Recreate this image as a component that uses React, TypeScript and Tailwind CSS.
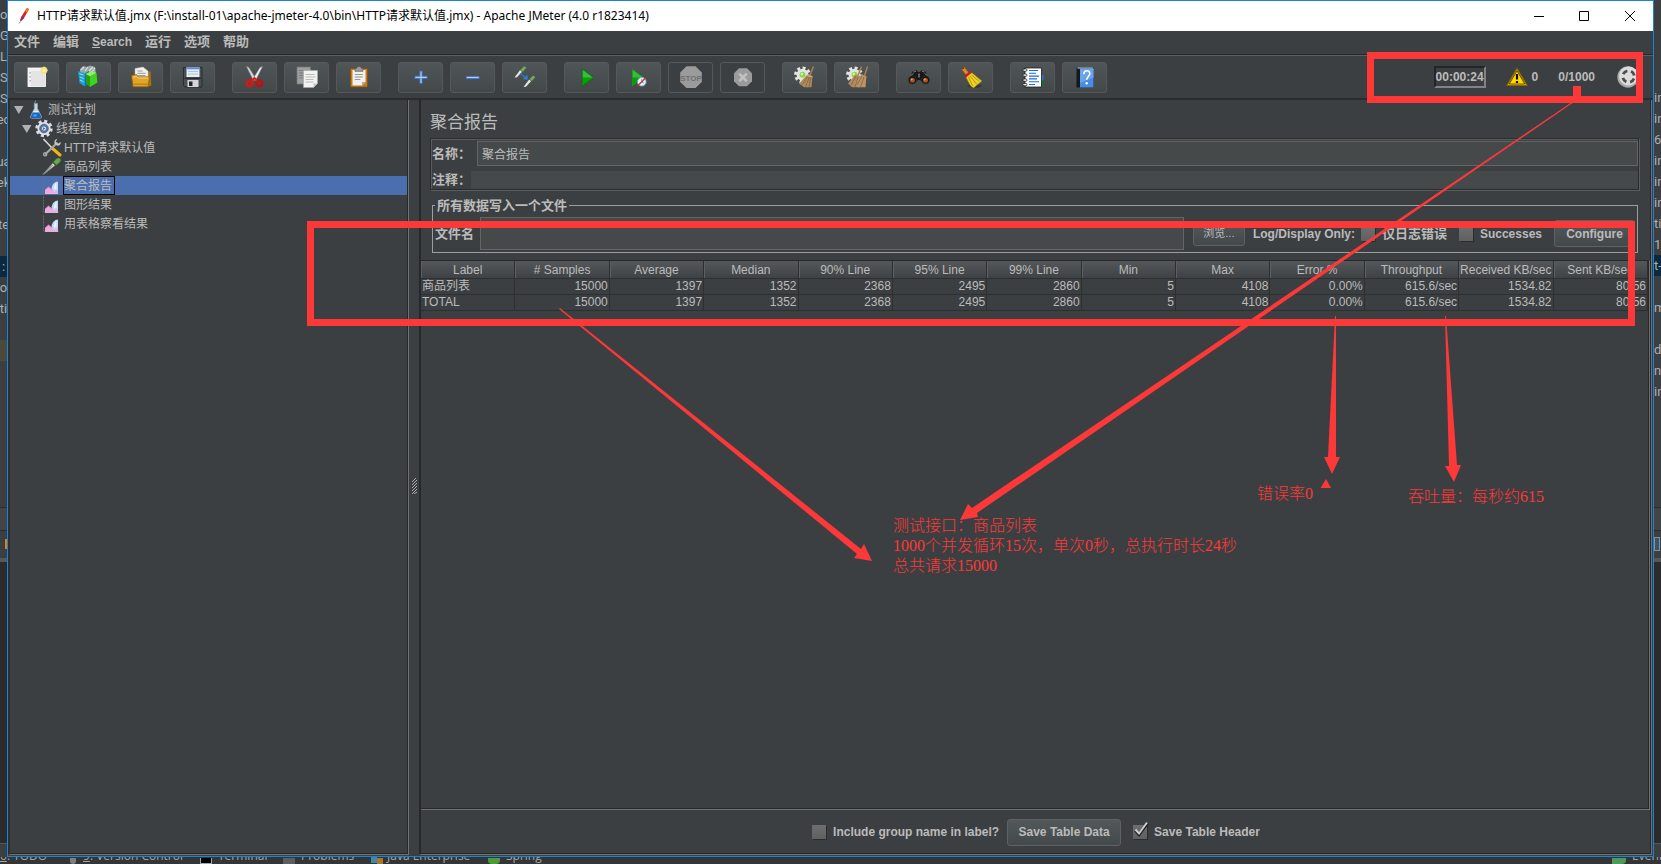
import React from "react";

type IconProps = { children: React.ReactNode };

function ToolIcon({ children }: IconProps) {
  return (
    <svg viewBox="0 0 25 25" className="h-[25px] w-[25px] shrink-0" aria-hidden="true">
      {children}
    </svg>
  );
}

function TreeIcon({ children }: IconProps) {
  return (
    <svg viewBox="0 0 20 19" className="h-[19px] w-5 shrink-0" aria-hidden="true">
      {children}
    </svg>
  );
}

/* ---------- toolbar icons ---------- */

const NewIcon = () => (
  <ToolIcon>
    <rect x="4" y="3" width="17.5" height="18.5" fill="#f1f1f1" stroke="#fff" strokeWidth="0.8" />
    <rect x="7" y="6" width="14" height="15" fill="#e4e4e4" />
    <g fill="#a8a8a8">
      <rect x="5.5" y="7" width="1.2" height="1.6" />
      <rect x="5.5" y="11" width="1.2" height="1.6" />
      <rect x="5.5" y="15" width="1.2" height="1.6" />
    </g>
    <circle cx="20" cy="5.3" r="3.4" fill="#f3e27a" />
    <circle cx="20" cy="5.3" r="1.6" fill="#fff8c8" />
    <path d="M20 1.2v8.2M15.9 5.3h8.2" stroke="#f6e884" strokeWidth="0.7" />
  </ToolIcon>
);

const TemplatesIcon = () => (
  <ToolIcon>
    <path d="M4 4l3-3 4 1 3-1.5 5 1.5 1 6-9 4-7-3z" fill="#9aa6a8" />
    <path d="M5 5l3-3M9 6l3-4M13 6l4-4M16 7l3-4" stroke="#d9dfe0" strokeWidth="1.2" />
    <path d="M2 6l7 2.5v13L3.5 18z" fill="#1b9fd0" />
    <path d="M9 8.5l4-2.5v13l-4 2.5z" fill="#0b6f9e" />
    <path d="M3.4 8.5l4.2 1.6M3.8 12l3.8 1.6M4 15l3.6 1.8" stroke="#a8e2f4" strokeWidth="1" />
    <path d="M9.5 9l4.5 2.2v11L10 19z" fill="#2c9c14" />
    <path d="M14 11.2L20.5 8l.9 9.4L14 22z" fill="#3fd41f" />
    <path d="M9.5 9l6-3 5 2-6.5 3.2z" fill="#8df268" />
  </ToolIcon>
);

const OpenIcon = () => (
  <ToolIcon>
    <path d="M14 6.5h8.5l.8 14-3 1.3z" fill="#a9730e" />
    <path d="M7 3.5L15 2l5 4v9H7z" fill="#f0f0ee" stroke="#b9b9b5" strokeWidth="0.5" />
    <path d="M9.5 6h5M9.5 8.3h8M9.5 10.5h8" stroke="#8f8f8b" strokeWidth="0.9" />
    <path d="M3.5 10.5l5-1 1.5 2.3h11.5l-1.5 10H5z" fill="#e2a428" stroke="#8f6006" strokeWidth="0.7" />
    <path d="M5 12.3l3.5-.8 1.5 1.5h10" stroke="#f8d57c" strokeWidth="0.9" fill="none" />
    <path d="M5.500 20h14.300l.2-1.500H5.300z" fill="#c2841a" />
  </ToolIcon>
);

const SaveIcon = () => (
  <ToolIcon>
    <path d="M3.5 2.5h18.500v19.500H5l-1.500-1.500z" fill="#4a4f54" stroke="#24282b" strokeWidth="0.9" />
    <rect x="6.5" y="2.3" width="13" height="9.7" fill="#e4eefa" />
    <rect x="6.5" y="2.3" width="13" height="2" fill="#5d8fd0" />
    <path d="M8 6.5h10M8 9h10" stroke="#a8c0dd" strokeWidth="0.9" />
    <rect x="7.5" y="15" width="11" height="7" fill="#d6d6d6" />
    <rect x="9" y="16.5" width="3.5" height="4.5" fill="#22262a" />
    <path d="M4.5 13.3h16.5" stroke="#1f2225" strokeWidth="1" />
  </ToolIcon>
);

const CutIcon = () => (
  <ToolIcon>
    <path d="M4.5 1.5L6.8 2.5 14 14l-2.5 1.5z" fill="#dadcdc" stroke="#8b8f90" strokeWidth="0.5" />
    <path d="M20.5 1.5L18 2.5 11 14l2.5 1.5z" fill="#f0f1f1" stroke="#8b8f90" strokeWidth="0.5" />
    <ellipse cx="7.7" cy="18.3" rx="3" ry="2.8" fill="none" stroke="#e01414" strokeWidth="2.3" transform="rotate(-35 7.7 18.3)" />
    <ellipse cx="17.3" cy="18.3" rx="3" ry="2.8" fill="none" stroke="#c90d0d" strokeWidth="2.3" transform="rotate(35 17.3 18.3)" />
    <path d="M9.5 16l3-3 3 3" stroke="#e01414" strokeWidth="1.8" fill="none" />
  </ToolIcon>
);

const CopyIcon = () => (
  <ToolIcon>
    <path d="M3 2h13.5v17H3z" fill="#9da09f" stroke="#747776" strokeWidth="0.7" />
    <path d="M5 5.5h9M5 8h9M5 10.5h9M5 13h9" stroke="#6f7271" strokeWidth="0.8" />
    <path d="M9.5 5.5H23.5v13l-4 4h-10z" fill="#f2f2f0" stroke="#a9a9a6" strokeWidth="0.7" />
    <path d="M11.5 9.5h9M11.5 12h10M11.5 14.5h8M11.5 17h8" stroke="#b4b5b4" strokeWidth="0.9" />
    <path d="M23.5 18.5h-4v4z" fill="#c4c4c2" />
  </ToolIcon>
);

const PasteIcon = () => (
  <ToolIcon>
    <rect x="4.5" y="3.5" width="17" height="18.5" rx="1" fill="#c27d1c" stroke="#8a520a" strokeWidth="0.8" />
    <path d="M6.5 5h13v12l-3.5 3.5h-9.5z" fill="#f1f1ef" />
    <path d="M19.5 17H16v3.5z" fill="#a9a9a6" />
    <path d="M8.8 9.5h8M8.8 12h8M8.8 14.5h5.5" stroke="#8d8e8d" strokeWidth="0.9" />
    <path d="M9 3.5h1.5l1-1.8h3l1 1.8H17V6.3H9z" fill="#9c9e9d" stroke="#5c5e5d" strokeWidth="0.7" />
  </ToolIcon>
);

const PlusIcon = () => (
  <ToolIcon>
    <path d="M13 5.8v13M6.5 12.3h13" stroke="#3f74c0" strokeWidth="3.2" />
    <path d="M13 6.6v11.4M7.3 12.3h11.4" stroke="#b3cdf2" strokeWidth="1.2" />
  </ToolIcon>
);

const MinusIcon = () => (
  <ToolIcon>
    <path d="M6 12.5h13.5" stroke="#3f74c0" strokeWidth="3.2" />
    <path d="M6.8 12.5h11.9" stroke="#b3cdf2" strokeWidth="1.2" />
  </ToolIcon>
);

const ToggleIcon = () => (
  <ToolIcon>
    <path d="M2.5 12.500l6-8 2 1.700-5.500 6z" fill="#e3e6e3" />
    <path d="M8.500 5l3.500-3.800 2.300 1.400L10.700 7z" fill="#72ad58" />
    <path d="M7.7 4.2l3.5 3.5" stroke="#3b5f2d" strokeWidth="0.9" />
    <path d="M11.500 22l6-8 2 1.700-5.500 6z" fill="#e3e6e3" />
    <path d="M17.500 14.300l3.500-3.800 2.300 1.400L19.700 16.300z" fill="#72ad58" />
    <path d="M16.8 13.5l3.5 3.500" stroke="#3b5f2d" strokeWidth="0.9" />
    <path d="M8.5 8.5l5 4.2" stroke="#2f7fe0" strokeWidth="1.5" strokeDasharray="2 0.8" />
    <path d="M15.8 14.5l-.5-5-4.3 4.7z" fill="#2f7fe0" />
  </ToolIcon>
);

const StartIcon = () => (
  <ToolIcon>
    <path d="M8 3.5v18L20 12.5z" fill="#0a9d0a" />
    <path d="M8.7 5v7.5h10z" fill="#3fb83f" />
    <path d="M8 3.5v18L20 12.5z" fill="none" stroke="#0a5e0a" strokeWidth="0.6" />
  </ToolIcon>
);

const StartNoPauseIcon = () => (
  <ToolIcon>
    <path d="M6 3.5v18L18 12.5z" fill="#0a9d0a" />
    <path d="M6.7 5v7.5h10z" fill="#3fb83f" />
    <circle cx="15.8" cy="16.8" r="4.3" fill="#e6eef8" stroke="#7aa2d6" strokeWidth="0.8" />
    <path d="M15.8 14v3l2 1" stroke="#5b7fb4" strokeWidth="0.8" fill="none" />
    <path d="M11.5 21l8.5-8.5" stroke="#c8322e" strokeWidth="1.3" />
  </ToolIcon>
);

const StopIcon = () => (
  <ToolIcon>
    <path d="M8.500 1.300h9l6.300 6.300v9.300L17.500 23h-9l-6.300-6.100V7.600z" fill="#9b9b9b" />
    <text x="13" y="15.500" textAnchor="middle" fontSize="8" fontWeight="bold" fontFamily="Liberation Sans" fill="#707070">
      STOP
    </text>
  </ToolIcon>
);

const ShutdownIcon = () => (
  <ToolIcon>
    <path d="M9 3.3h8l5 5v8l-5 5H9l-5-5v-8z" fill="#9b9b9b" />
    <path d="M9.3 8.7l7.4 7.4M16.7 8.7l-7.4 7.4" stroke="#c2c2c2" strokeWidth="2.6" />
  </ToolIcon>
);

const GearShape = () => (
  <g>
    <circle cx="10.5" cy="9.8" r="6.9" fill="none" stroke="#e6e6e6" strokeWidth="3" strokeDasharray="2.9 2.5" />
    <circle cx="10.5" cy="9.8" r="6" fill="#e3e4e3" />
    <circle cx="10.5" cy="9.8" r="3" fill="#8ad94a" />
    <circle cx="9.8" cy="9" r="1.2" fill="#d0f7a8" />
  </g>
);

const ClearIcon = () => (
  <ToolIcon>
    <GearShape />
    <path d="M21.5 1.5l-3.5 9" stroke="#a97f4d" strokeWidth="1.5" />
    <path d="M15.5 9.500l5 1.500-1 11.300H12L7 18.500z" fill="#b08a5c" />
    <path d="M16 11l-6 9M17.500 11.500l-4 10.500M19 12l-2 10" stroke="#7d5d36" strokeWidth="0.7" />
    <path d="M15 10.500l5.500 1.500" stroke="#d8b888" strokeWidth="0.9" />
  </ToolIcon>
);

const ClearAllIcon = () => (
  <ToolIcon>
    <GearShape />
    <path d="M17.500 1.500l-3.500 9M23.500 1.500l-3 9" stroke="#a97f4d" strokeWidth="1.5" />
    <path d="M11.500 9.500l5 1.500-1 11.300H8L4 18.500z" fill="#b08a5c" />
    <path d="M17.500 9.500l5 1.500-1 11.300H14L10 18.500z" fill="#ba9466" />
    <path d="M12 11l-5 9M14 12l-3 10M18 11l-5 9M20 12l-3.500 10" stroke="#7d5d36" strokeWidth="0.7" />
  </ToolIcon>
);

const SearchIcon = () => (
  <ToolIcon>
    <path d="M6.500 6.500l4-1.200 1.500 1.700h2l1.500-1.700 4 1.200 3.800 8-4.500 4-5-3.500h-1.600l-5 3.500-4.700-4z" fill="#17181a" />
    <path d="M7.500 7l2.500-.7M16 6.300l2.500.7M4.500 10.500l3-2M21.500 10.500l-3-2" stroke="#8b8f92" strokeWidth="0.9" />
    <circle cx="6.5" cy="15" r="4" fill="#0f1011" stroke="#3b3d3f" strokeWidth="0.6" />
    <circle cx="19.5" cy="15" r="4" fill="#0f1011" stroke="#3b3d3f" strokeWidth="0.6" />
    <circle cx="6.5" cy="15.2" r="2.5" fill="#a8501c" />
    <circle cx="19.5" cy="15.2" r="2.5" fill="#a8501c" />
    <circle cx="5.8" cy="14.4" r="1" fill="#e0a072" />
    <circle cx="18.8" cy="14.4" r="1" fill="#e0a072" />
    <rect x="12" y="8.5" width="2" height="4" fill="#606467" />
  </ToolIcon>
);

const BroomIcon = () => (
  <ToolIcon>
    <ellipse cx="16.5" cy="21" rx="7" ry="1.8" fill="#24282a" opacity="0.55" />
    <path d="M5.5 3.8l4 5.2" stroke="#8f5410" strokeWidth="4.4" strokeLinecap="round" />
    <path d="M5.5 3.8l4 5.2" stroke="#cf8c37" strokeWidth="3" strokeLinecap="round" />
    <circle cx="5" cy="3.3" r="1" fill="#5b3206" />
    <path d="M7.500 11.500l5.500-4.500 11 9-8.500 7-3-2z" fill="#ecd026" stroke="#8f7a08" strokeWidth="0.6" />
    <path d="M10.500 12l4 9M12 11l7 8.500M13.500 10l8 6.500" stroke="#a68f10" strokeWidth="0.8" />
    <path d="M7 11.8l6.3-5.3" stroke="#d31a1a" strokeWidth="2.5" />
  </ToolIcon>
);

const ListIcon = () => (
  <ToolIcon>
    <rect x="20" y="10" width="3.5" height="5.5" fill="#2f6fe0" />
    <rect x="20" y="15.5" width="3.5" height="5.5" fill="#0b7a12" />
    <rect x="5" y="3" width="16.5" height="19" fill="#fff" stroke="#1c1c1c" strokeWidth="0.8" />
    <path d="M9 5.500h9M9 8.300h7M9 11.100h10M9 13.900h8M9 16.700h10M9 19.500h6" stroke="#1c6be0" strokeWidth="1.1" />
    <g fill="#fff" stroke="#111" strokeWidth="0.7">
      <rect x="3" y="4" width="4" height="2.2" rx="1" />
      <rect x="3" y="9" width="4" height="2.2" rx="1" />
      <rect x="3" y="14" width="4" height="2.2" rx="1" />
      <rect x="3" y="18.5" width="4" height="2.2" rx="1" />
    </g>
  </ToolIcon>
);

const HelpIcon = () => (
  <ToolIcon>
    <path d="M4.5 3.5L6 2h15.500v20.500H4.500z" fill="#15181c" />
    <path d="M5.5 3h15.5" stroke="#dfe6ee" strokeWidth="1" />
    <rect x="8" y="3.5" width="13.5" height="19" fill="#4b8ce2" />
    <path d="M8 3.5h13.5v9L8 18z" fill="#6aa3ec" />
    <path d="M11.8 9.3c0-4.5 6-4.5 6-.8 0 3-3.1 3-3.1 6.3" fill="none" stroke="#fff" strokeWidth="1.5" />
    <circle cx="14.7" cy="18.3" r="1.2" fill="#fff" />
  </ToolIcon>
);

/* ---------- tree icons ---------- */

const FlaskIcon = () => (
  <TreeIcon>
    <path d="M8.3 3.5L9.5 1.5v-1M8.3 3.5v5L4.5 16.5c-.4 1 .2 1.7 1.2 1.7h8.600c1 0 1.600-.7 1.200-1.700L11.500 8.500v-5z" fill="#c3d3e2" stroke="#8e9eac" strokeWidth="0.7" />
    <path d="M6.8 12.5h6.4l2 4c.3.9 0 1.5-1 1.5H5.8c-1 0-1.3-.6-1-1.5z" fill="#1767c4" />
    <path d="M7.5 11.5h5" stroke="#e9f3fb" strokeWidth="1.2" />
    <ellipse cx="9" cy="15.5" rx="2" ry="1.2" fill="#4f9be8" />
  </TreeIcon>
);

const GearIcon = () => (
  <TreeIcon>
    <circle cx="10" cy="9.5" r="7.2" fill="none" stroke="#d7dade" strokeWidth="3" strokeDasharray="3 2.65" />
    <circle cx="10" cy="9.5" r="6.6" fill="#dfe2e6" />
    <circle cx="10" cy="9.5" r="4.3" fill="#5878a8" stroke="#33507d" strokeWidth="0.7" />
    <circle cx="10" cy="9.5" r="2" fill="#e8eff8" />
    <path d="M9.2 8.3v2.6l2-1.3z" fill="#33507d" />
  </TreeIcon>
);

const ToolsIcon = () => (
  <TreeIcon>
    <path d="M1.5 1l8.5 9" stroke="#d9dcdc" strokeWidth="1.6" />
    <path d="M10 10l8 7" stroke="#f3b50c" strokeWidth="3" strokeLinecap="round" />
    <path d="M3 16.5L15.5 4.5" stroke="#a3a9a9" strokeWidth="2" />
    <path d="M15.3.8l-1.5 2.6.6 1.8 2 .4 2.3-1.7c.3 2.3-1.5 4.3-3.8 3.7L12.5 5.5C12 3.2 13.3 1 15.3.8z" fill="#c3c8c8" />
    <circle cx="3.2" cy="16.3" r="1.6" fill="none" stroke="#a3a9a9" strokeWidth="1.3" />
  </TreeIcon>
);

const PipetteIcon = () => (
  <TreeIcon>
    <path d="M.8 17.500L11.500 5.500l2.500 2L3.500 16z" fill="#d8dcd8" stroke="#8d928d" strokeWidth="0.6" />
    <path d="M2.5 16.2l8-8" stroke="#6b716b" strokeWidth="0.9" />
    <path d="M10.500 5.500c2-1 3-3.800 5.700-4.500 1.800 0 2.800 1.200 2.500 2.700-.8 2.100-3.400 2.800-4.500 4.900z" fill="#68a650" stroke="#41752e" strokeWidth="0.6" />
    <path d="M10.3 4.7l4.3 4.3" stroke="#35552a" strokeWidth="1.3" />
  </TreeIcon>
);

const ChartIcon = () => (
  <TreeIcon>
    <path d="M1.500 1.500v15.500h15.500" stroke="#6c6f71" strokeWidth="0.9" fill="none" strokeDasharray="2 1" />
    <path d="M3 17v-3l3.500-3 3 2 6.500-3v7z" fill="#f0a8e0" />
    <path d="M3 14l3.500-3 3 2.500 4-2" stroke="#d87cc4" strokeWidth="0.9" fill="none" />
    <path d="M16 5.500v8.500l-3.500 2-3-3.500c.5-4 3-7 6.500-7z" fill="#bcd8fa" />
    <path d="M14.500 6.500v6.500l-2.500.5c-.5-3 .8-5.500 2.500-7z" fill="#eaf4ff" />
    <path d="M3 17.5h13" stroke="#f8d4f0" strokeWidth="0.8" />
  </TreeIcon>
);

/* ---------- data ---------- */

const toolGroups = [
  [
    { name: "New", icon: <NewIcon /> },
    { name: "Templates", icon: <TemplatesIcon /> },
    { name: "Open", icon: <OpenIcon /> },
    { name: "Save", icon: <SaveIcon /> },
  ],
  [
    { name: "Cut", icon: <CutIcon /> },
    { name: "Copy", icon: <CopyIcon /> },
    { name: "Paste", icon: <PasteIcon /> },
  ],
  [
    { name: "Expand All", icon: <PlusIcon /> },
    { name: "Collapse All", icon: <MinusIcon /> },
    { name: "Toggle", icon: <ToggleIcon /> },
  ],
  [
    { name: "Start", icon: <StartIcon /> },
    { name: "Start no pauses", icon: <StartNoPauseIcon /> },
    { name: "Stop", icon: <StopIcon />, disabled: true },
    { name: "Shutdown", icon: <ShutdownIcon />, disabled: true },
  ],
  [
    { name: "Clear", icon: <ClearIcon /> },
    { name: "Clear All", icon: <ClearAllIcon /> },
  ],
  [
    { name: "Search", icon: <SearchIcon /> },
    { name: "Reset Search", icon: <BroomIcon /> },
  ],
  [
    { name: "Function Helper", icon: <ListIcon /> },
    { name: "Help", icon: <HelpIcon /> },
  ],
];

const treeRows = [
  { label: "测试计划", icon: <FlaskIcon />, pad: "pl-1", open: true },
  { label: "线程组", icon: <GearIcon />, pad: "pl-3", open: true },
  { label: "HTTP请求默认值", icon: <ToolsIcon />, pad: "pl-8" },
  { label: "商品列表", icon: <PipetteIcon />, pad: "pl-8" },
  { label: "聚合报告", icon: <ChartIcon />, pad: "pl-8", selected: true },
  { label: "图形结果", icon: <ChartIcon />, pad: "pl-8" },
  { label: "用表格察看结果", icon: <ChartIcon />, pad: "pl-8" },
];

const columns = [
  "Label", "# Samples", "Average", "Median", "90% Line", "95% Line", "99% Line",
  "Min", "Max", "Error %", "Throughput", "Received KB/sec", "Sent KB/sec",
];

const values = ["15000", "1397", "1352", "2368", "2495", "2860", "5", "4108", "0.00%", "615.6/sec", "1534.82", "80.56"];
const rows = [
  ["商品列表", ...values],
  ["TOTAL", ...values],
];

const leftEditor = ["o", "G", "Lo", "S.", "S.", "ec", "", "ua", "ek", "", "te", "", ":", "o", "ti", "", ""];
const rightEditor = ["", "", "", "", "in", "in", "6", "in", "in", "in", "ti", "1.", "t-", "", "m", "", "d", "ns", "in"];

/* ---------- parts ---------- */

const boldButton =
  "rounded-[3px] border border-[#5e6263] bg-linear-to-b from-[#53595b] to-[#43484a] font-bold text-[#bbbbbb]";

function TitleBar() {
  return (
    <header className="flex h-[30px] shrink-0 items-center bg-white text-black">
      <svg viewBox="0 0 14 18" className="ml-2 h-[18px] w-3.5" aria-hidden="true">
        <path d="M10.500 1.500c1.500-.8 2.500 0 2 1.500L8 11l-3.500 3.500c-.5-1 0-3 1-5z" fill="#d22128" />
        <path d="M10.500 1.500c1.500-.8 2.500 0 2 1.500L11 6 9 4z" fill="#e97826" />
        <path d="M8 11l-3.500 3.500c-.3-1.500.5-3.500 1.200-5z" fill="#9e2064" />
        <path d="M4.5 14.5l-1.5 2" stroke="#6d6e71" strokeWidth="0.8" />
      </svg>
      <h1 className="ml-[7px] flex-1 truncate font-['Noto_Sans','Noto_Sans_CJK_SC',sans-serif] text-xs">
        HTTP请求默认值.jmx (F:\install-01\apache-jmeter-4.0\bin\HTTP请求默认值.jmx) - Apache JMeter (4.0 r1823414)
      </h1>
      <div className="flex">
        <button aria-label="Minimize" className="flex h-7 w-[45px] items-center justify-center">
          <svg viewBox="0 0 12 12" className="h-3 w-3"><path d="M1 6.500h10" stroke="#000" /></svg>
        </button>
        <button aria-label="Maximize" className="flex h-7 w-[46px] items-center justify-center">
          <svg viewBox="0 0 12 12" className="h-3 w-3"><path d="M1.500 1.500h9v9h-9z" fill="none" stroke="#000" /></svg>
        </button>
        <button aria-label="Close" className="flex h-7 w-[46px] items-center justify-center">
          <svg viewBox="0 0 12 12" className="h-3 w-3"><path d="M1 1l10 10M11 1L1 11" stroke="#000" /></svg>
        </button>
      </div>
    </header>
  );
}

function MenuBar() {
  return (
    <nav className="flex h-[25px] shrink-0 items-center gap-[13px] border-b border-[#5b5e60] pb-0.5 pl-1.5 text-[13px] font-bold shadow-[inset_0_-1px_0_#26282a]">
      <button>文件</button>
      <button>编辑</button>
      <button className="text-xs"><span className="underline">S</span>earch</button>
      <button>运行</button>
      <button>选项</button>
      <button>帮助</button>
    </nav>
  );
}

function Toolbar() {
  return (
    <div className="flex h-[44px] shrink-0 items-start border-b-2 border-[#2a2c2e] pt-1.5 pl-1.5">
      <div className="flex gap-[17px]">
        {toolGroups.map((group, i) => (
          <div key={i} className="flex gap-[7px]">
            {group.map((tool) => (
              <button
                key={tool.name}
                aria-label={tool.name}
                disabled={"disabled" in tool}
                className="flex h-[31px] w-[45px] items-center justify-center rounded-[3px] border border-[#56595b] bg-linear-to-b from-[#505658] to-[#434849] disabled:bg-none"
              >
                {tool.icon}
              </button>
            ))}
          </div>
        ))}
      </div>
      <div className="mr-3.5 ml-auto flex h-[30px] items-center text-xs font-bold">
        <time className="flex h-[22px] items-center border-2 border-t-[#232527] border-r-[#808384] border-b-[#808384] border-l-[#232527]">
          00:00:24
        </time>
        <svg viewBox="0 0 22 20" className="ml-5 h-5 w-[22px]" aria-hidden="true">
          <path d="M11 1.5L21 18.5H1z" fill="#f5c400" stroke="#8a6a00" strokeWidth="1.2" strokeLinejoin="round" />
          <path d="M11 3.8L18.8 17H3.2z" fill="#ffd800" stroke="#3c3000" strokeWidth="0.8" />
          <path d="M11 7v5.5" stroke="#111" strokeWidth="2.2" />
          <rect x="9.9" y="14" width="2.2" height="2" fill="#111" />
        </svg>
        <span className="ml-1">0</span>
        <span className="ml-5">0/1000</span>
        <svg viewBox="0 0 22 22" className="ml-[22px] h-[22px] w-[22px]" aria-hidden="true">
          <circle cx="11" cy="11" r="10.7" fill="#a9a9a9" />
          <circle cx="11.5" cy="10" r="9.5" fill="#dcdcdc" />
          <circle cx="11.5" cy="10.5" r="5.8" fill="none" stroke="#4c4c4c" strokeWidth="2.8" strokeDasharray="5.2 3.91" strokeDashoffset="-2" />
        </svg>
      </div>
    </div>
  );
}

function TestTree() {
  return (
    <aside className="mb-px flex w-[401px] shrink-0 flex-col border-r border-b border-l-2 border-r-[#6f7274] border-b-[#6f7274] border-l-[#2c2e30] shadow-[inset_-1px_-1px_0_#26282a]">
      <ul className="mr-px">
        {treeRows.map((row) => (
          <li
            key={row.label}
            className={`flex h-[19px] items-center text-xs ${row.pad} ${row.selected ? "bg-[#4b6eaf]" : ""}`}
          >
            {row.open && (
              <svg viewBox="0 0 12 10" className="h-2.5 w-3" aria-hidden="true">
                <path d="M0 1h9.500L4.800 9z" fill="#b0b1b2" />
              </svg>
            )}
            {row.icon}
            <span
              className={`ml-px flex h-[19px] items-center border pr-0.5 ${
                row.selected ? "border-black" : "border-transparent"
              }`}
            >
              {row.label}
            </span>
          </li>
        ))}
      </ul>
    </aside>
  );
}

function Check({ id, label, checked, cjk }: { id: string; label: string; checked?: boolean; cjk?: boolean }) {
  return (
    <span className="flex items-center gap-[7px]">
      <span className="relative flex">
        <input
          id={id}
          type="checkbox"
          defaultChecked={checked}
          className="peer h-3.5 w-3.5 appearance-none bg-linear-to-b from-[#6e6e6e] to-[#606060] shadow-[1px_1px_0_#2a2c2e]"
        />
        <svg viewBox="0 0 16 16" className="pointer-events-none absolute -top-1 left-0 hidden h-4 w-4 peer-checked:block" aria-hidden="true">
          <path d="M2.500 9.500l3.500 4L14.500 2" fill="none" stroke="#202224" strokeWidth="3.2" />
          <path d="M2.500 8.500l3.500 4L14 1.500" fill="none" stroke="#cfcfcf" strokeWidth="2" />
        </svg>
      </span>
      <label htmlFor={id} className={cjk ? "text-[13px]" : "text-xs"}>{label}</label>
    </span>
  );
}

function ReportPanel() {
  const etched = "border border-[#2a2c2e] shadow-[1px_1px_0_#5b5e60,inset_1px_1px_0_#5b5e60]";
  return (
    <main className="mr-px mb-px flex min-w-0 flex-1 flex-col border-r border-b border-l-2 border-r-[#6f7274] border-b-[#6f7274] border-l-[#26282a] shadow-[inset_-1px_-1px_0_#26282a]">
      <h2 className="flex h-[38px] items-center pt-[7px] pl-[9px] text-[17px]">
        <span className="leading-5">聚合报告</span>
      </h2>

      <div className={`mr-3 ml-[9px] flex flex-col gap-[5px] pt-0.5 pl-px text-[13px] font-bold ${etched}`}>
        <div className="flex h-[25px] items-center">
          <label htmlFor="name" className="w-[45px] shrink-0">名称：</label>
          <input
            id="name"
            defaultValue="聚合报告"
            className="h-full min-w-0 flex-1 border border-[#646464] bg-[#45494a] pl-1 text-xs font-normal"
          />
        </div>
        <div className="flex h-[18px] items-center">
          <label htmlFor="comment" className="w-[39px] shrink-0">注释：</label>
          <input id="comment" className="h-full min-w-0 flex-1 bg-[#45494a] px-1 text-xs font-normal" />
        </div>
      </div>

      <fieldset className="mt-2 mr-[13px] ml-[11px] min-w-0 border border-[#9b9d9e] px-0.5 pb-0.5 font-bold">
        <legend className="h-3.5 px-0.5 text-[13px] leading-4">所有数据写入一个文件</legend>
        <div className="flex items-center pt-[5px]">
          <label htmlFor="file" className="w-[45px] shrink-0 text-[13px]">文件名</label>
          <input id="file" className="h-[33px] min-w-0 flex-1 border border-[#646464] bg-[#45494a] px-1 text-xs" />
          <button className="ml-[9px] h-[25px] w-[52px] rounded-[3px] border border-[#5e6263] bg-linear-to-b from-[#53595b] to-[#43484a] text-[11px] font-normal">
            浏览...
          </button>
          <span className="ml-2 text-xs">Log/Display Only:</span>
          <div className="ml-1.5 flex gap-3">
            <Check id="errors" label="仅日志错误" cjk />
            <Check id="successes" label="Successes" />
          </div>
          <button className={`ml-3 h-[27px] w-[81px] text-xs ${boldButton}`}>Configure</button>
        </div>
      </fieldset>

      <div className="mt-[7px] mr-px min-h-0 flex-1 border-t border-r border-b border-t-[#26282a] border-r-[#6f7274] border-b-[#6f7274] pr-px shadow-[inset_-1px_-1px_0_#26282a]">
        <table className="w-full table-fixed border-separate border-spacing-0 text-xs">
          <thead>
            <tr className="h-[18px]">
              {columns.map((c) => (
                <th
                  key={c}
                  className="overflow-hidden border-r border-b border-[#2d2f31] bg-linear-to-b from-[#54585a] to-[#3f4244] p-0 leading-4 font-normal whitespace-nowrap shadow-[inset_1px_0_0_#5c5f61]"
                >
                  {c}
                </th>
              ))}
            </tr>
          </thead>
          <tbody>
            {rows.map((r) => (
              <tr key={r[0]} className="h-4">
                {r.map((cell, i) => (
                  <td
                    key={i}
                    className={`border-r border-b border-[#2d2f31] p-0 leading-[15px] ${i === 0 ? "pl-px" : "pr-px text-right"}`}
                  >
                    {cell}
                  </td>
                ))}
              </tr>
            ))}
          </tbody>
        </table>
      </div>

      <footer className="flex h-[44px] shrink-0 items-center justify-center text-xs font-bold">
        <Check id="group" label="Include group name in label?" />
        <button className={`mr-3 ml-2 h-[27px] w-[114px] ${boldButton}`}>Save Table Data</button>
        <Check id="header" label="Save Table Header" checked />
      </footer>
    </main>
  );
}

function EditorEdge({ lines, left }: { lines: string[]; left?: boolean }) {
  return (
    <div className={`flex w-[7px] shrink-0 flex-col overflow-hidden bg-[#3c3f41] font-['Roboto',sans-serif] text-[13px] text-[#a9b0b6] ${left ? "pt-1" : "pt-[3px]"}`}>
      {lines.map((line, i) => (
        <div
          key={i}
          className={`flex h-[21px] shrink-0 items-center ${i === 12 ? "bg-[#0d293e]" : ""} ${
            left && i === 16 ? "bg-[#4b4a3d]" : ""
          } ${left && i > 4 ? "justify-center" : ""}`}
        >
          {line}
        </div>
      ))}
      <div className="mt-auto h-[24px] shrink-0 border-y border-[#2a2c2e] bg-[#414547]" />
      <div className="h-[27px] shrink-0">
        {left ? (
          <div className="mt-2 ml-[5px] h-2.5 w-0.5 bg-[#d9821a]" />
        ) : (
          <div className="mt-1.5 h-3.5 w-1.5 border border-[#8b8e90] bg-[#2f5a73]" />
        )}
      </div>
      <div className="h-1 shrink-0 bg-[#55585a]" />
      <div className="h-[281px] shrink-0 bg-[#2b2b2b]" />
      <div className="h-3.5 shrink-0 border-t border-[#55585a]" />
    </div>
  );
}

function BottomEdge() {
  return (
    <div className="flex h-[7px] shrink-0 items-end overflow-hidden bg-[#333536] font-['Open_Sans',sans-serif] text-xs leading-4 whitespace-nowrap text-[#a4a7a9]">
      <span className="w-[70px] shrink-0"><u>6</u>: TODO</span>
      <i className="mr-[7px] h-1.5 w-1.5 shrink-0 rounded-b bg-[#7d8082]" />
      <span className="w-[117px] shrink-0"><u>9</u>: Version Control</span>
      <i className="mr-1.5 h-1.5 w-3 shrink-0 border border-t-0 border-[#a4a7a9] bg-black" />
      <span className="w-[65px] shrink-0">Terminal</span>
      <i className="mr-1.5 h-1.5 w-3 shrink-0 bg-[#5c5f61]" />
      <span className="w-[70px] shrink-0">Problems</span>
      <i className="h-1.5 w-1.5 shrink-0 self-start bg-[#4188a8]" />
      <i className="mr-1 h-1.5 w-1.5 shrink-0 bg-[#a8762c]" />
      <span className="w-[101px] shrink-0">Java Enterprise</span>
      <i className="mr-1.5 h-1.5 w-3 shrink-0 rounded-b bg-[#4f9a3a]" />
      <span>Spring</span>
      <i className="mr-1.5 ml-auto h-1.5 w-3.5 shrink-0 rounded-br bg-[#4f9a5a]" />
      <span className="w-[29px] shrink-0">Event</span>
    </div>
  );
}

function Annotations() {
  return (
    <div className="pointer-events-none absolute top-0 left-0 h-full w-full overflow-hidden font-['Liberation_Serif','Noto_Sans_CJK_SC',serif] text-base leading-5 font-light whitespace-nowrap text-[#fc3838]">
      <svg viewBox="0 0 1661 864" className="absolute top-0 left-0 h-[864px] w-[1661px]" fill="#fc3838" aria-hidden="true">
        <rect x="1370.5" y="55.5" width="269" height="44" fill="none" stroke="#fc3838" strokeWidth="7" />
        <rect x="310.5" y="224.5" width="1321" height="98" fill="none" stroke="#fc3838" strokeWidth="7" />
        <rect x="1573" y="86" width="8" height="12" />
        <path d="M1573.500 101l.5 1L977 513l1 4-18 3 8-16 4 4z" />
        <path d="M559 309l1-1L861 549l3-5 8 17-18-3 3-4z" />
        <path d="M1335 316h1v141h4l-8 17-8-17h4z" />
        <path d="M1445 316h1l11 149h4l-7 17-9-16h4z" />
        <path d="M1326 479l5 9h-10.5z" />
      </svg>
      <p className="absolute top-[516px] left-[893px]">
        测试接口：商品列表
        <br />
        1000个并发循环15次，单次0秒，总执行时长24秒
        <br />
        总共请求15000
      </p>
      <p className="absolute top-[484px] left-[1257px]">错误率0</p>
      <p className="absolute top-[487px] left-[1408px]">吞吐量：每秒约615</p>
    </div>
  );
}

export default function App() {
  return (
    <div className="relative flex h-screen w-full flex-col overflow-hidden bg-[#3c3f41] font-['Liberation_Sans','Noto_Sans_CJK_SC',sans-serif] text-[#bbbbbb]">
      <div className="flex min-h-0 flex-1">
        <EditorEdge lines={leftEditor} left />
        <div className="flex min-w-0 flex-1 flex-col border border-[#1883d7] bg-[#3c3f41]">
          <TitleBar />
          <MenuBar />
          <Toolbar />
          <div className="flex min-h-0 flex-1">
            <TestTree />
            <div className="flex w-2.5 shrink-0 items-center justify-center pt-4">
              <svg viewBox="0 0 5 16" className="h-4 w-[5px]" aria-hidden="true">
                <path d="M0 4l4-4M0 7l5-5M0 10l5-5M0 13l5-5M0 16l5-5M2 16l3-2" stroke="#b4b6b8" strokeWidth="0.9" />
              </svg>
            </div>
            <ReportPanel />
          </div>
        </div>
        <EditorEdge lines={rightEditor} />
      </div>
      <BottomEdge />
      <Annotations />
    </div>
  );
}
